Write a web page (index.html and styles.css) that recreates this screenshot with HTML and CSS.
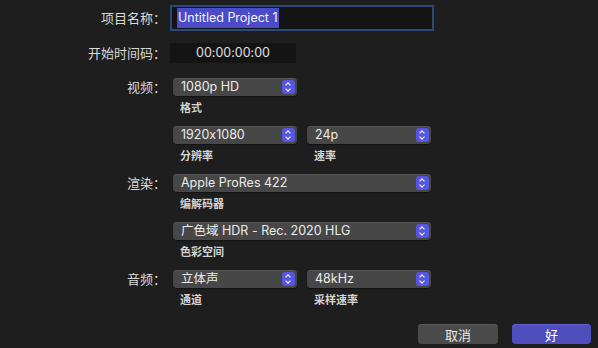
FILE: index.html
```html
<!DOCTYPE html>
<html lang="zh">
<head>
    <meta charset="UTF-8">
    <meta name="viewport" content="width=device-width, initial-scale=1.0">
    <title>新项目</title>
    <link rel="stylesheet" href="styles.css">
</head>
<body>

<div class="sheet">
    <div class="row row-name">
        <div class="label">项目名称：</div>
        <div class="field name-field"><span class="selected">Untitled Project 1</span></div>
    </div>

    <div class="row row-timecode">
        <div class="label">开始时间码：</div>
        <div class="timecode">00:00:00:00</div>
    </div>

    <!-- 视频 -->
    <div class="row group first">
        <div class="label">视频：</div>
        <div class="controls">
            <div class="pair">
                <div class="item">
                    <div class="popup small">1080p HD<span class="stepper"></span></div>
                    <div class="caption">格式</div>
                </div>
            </div>
            <div class="pair">
                <div class="item">
                    <div class="popup small">1920x1080<span class="stepper"></span></div>
                    <div class="caption">分辨率</div>
                </div>
                <div class="item">
                    <div class="popup small">24p<span class="stepper"></span></div>
                    <div class="caption">速率</div>
                </div>
            </div>
        </div>
    </div>

    <!-- 渲染 -->
    <div class="row group">
        <div class="label">渲染：</div>
        <div class="controls">
            <div class="pair">
                <div class="item">
                    <div class="popup wide">Apple ProRes 422<span class="stepper"></span></div>
                    <div class="caption">编解码器</div>
                </div>
            </div>
            <div class="pair">
                <div class="item">
                    <div class="popup wide">广色域 HDR - Rec. 2020 HLG<span class="stepper"></span></div>
                    <div class="caption">色彩空间</div>
                </div>
            </div>
        </div>
    </div>

    <!-- 音频 -->
    <div class="row group">
        <div class="label">音频：</div>
        <div class="controls">
            <div class="pair">
                <div class="item">
                    <div class="popup small">立体声<span class="stepper"></span></div>
                    <div class="caption">通道</div>
                </div>
                <div class="item">
                    <div class="popup small">48kHz<span class="stepper"></span></div>
                    <div class="caption">采样速率</div>
                </div>
            </div>
        </div>
    </div>

    <div class="buttons">
        <button type="button" class="btn cancel">取消</button>
        <button type="button" class="btn ok">好</button>
    </div>
</div>

</body>
</html>
```

FILE: styles.css
```css
body {
    margin: 0;
    background-color: #1e1e1e;
    font-family: Inter, "Noto Sans CJK SC", sans-serif;
    font-feature-settings: "calt" 0;
    color: #e2e2e2;
    font-size: 13px;
}
.sheet {
    width: 598px;
    height: 348px;
    padding-top: 5px;
    box-sizing: border-box;
    overflow: hidden;
}
.row {
    display: grid;
    grid-template-columns: 166px 1fr;
    column-gap: 4px;
}
.label {
    text-align: right;
    color: #dadada;
    font-size: 13px;
}
.row-name .label {
    line-height: 26px;
}
.field {
    box-sizing: border-box;
    width: 264px;
    height: 26px;
    border: 2px solid #2a4a7c;
    background: #131313;
    padding-left: 5px;
    line-height: 22px;
    font-size: 12.5px;
}
.selected {
    background: #4b4bc8;
    color: #f4f4ff;
    padding: 2px 1px 3px 1px;
}
.row-timecode {
    margin-top: 12px;
}
.row-timecode .label {
    line-height: 20px;
}
.timecode {
    width: 126px;
    height: 20px;
    line-height: 20px;
    background: #141414;
    text-align: center;
    font-size: 12.5px;
    color: #e0e0e0;
}
.group.first {
    margin-top: 15px;
}
.group .label {
    line-height: 18px;
}
.controls {
    padding-left: 3px;
}
.pair {
    display: flex;
    gap: 10px;
    margin-bottom: 11px;
}
.popup {
    position: relative;
    box-sizing: border-box;
    height: 18px;
    line-height: 18px;
    padding-left: 8px;
    background: #474747;
    border-radius: 4px;
    box-shadow: inset 0 1px 0 #555, 0 1px 1px rgba(0, 0, 0, 0.4);
    color: #ececec;
    font-size: 12.5px;
}
.popup.small {
    width: 124px;
}
.popup.wide {
    width: 258px;
}
.stepper {
    position: absolute;
    right: 2px;
    top: 2px;
    width: 13px;
    height: 14px;
    border-radius: 3px;
    background: #5656e0;
}
.stepper::before,
.stepper::after {
    content: "";
    position: absolute;
    left: 4px;
    width: 3px;
    height: 3px;
    border-left: 1.3px solid #fff;
    border-top: 1.3px solid #fff;
}
.stepper::before {
    top: 3px;
    transform: rotate(45deg);
}
.stepper::after {
    top: 7px;
    transform: rotate(-135deg);
}
.caption {
    margin-top: 5px;
    padding-left: 7px;
    font-size: 11px;
    line-height: 14px;
    font-weight: 600;
    color: #d4d4d4;
}
.buttons {
    display: flex;
    justify-content: flex-end;
    gap: 14px;
    padding-right: 7px;
    margin-top: 6px;
}
.btn {
    width: 80px;
    height: 20px;
    border: none;
    border-radius: 4px;
    font-family: Inter, "Noto Sans CJK SC", sans-serif;
    font-size: 13px;
    color: #e8e8e8;
    padding: 0;
}
.cancel {
    background: #4a4a4a;
    box-shadow: inset 0 1px 0 #585858;
}
.ok {
    width: 79px;
    background: #4e4ebd;
    box-shadow: inset 0 1px 0 #6060d0;
    color: #fff;
}
```
